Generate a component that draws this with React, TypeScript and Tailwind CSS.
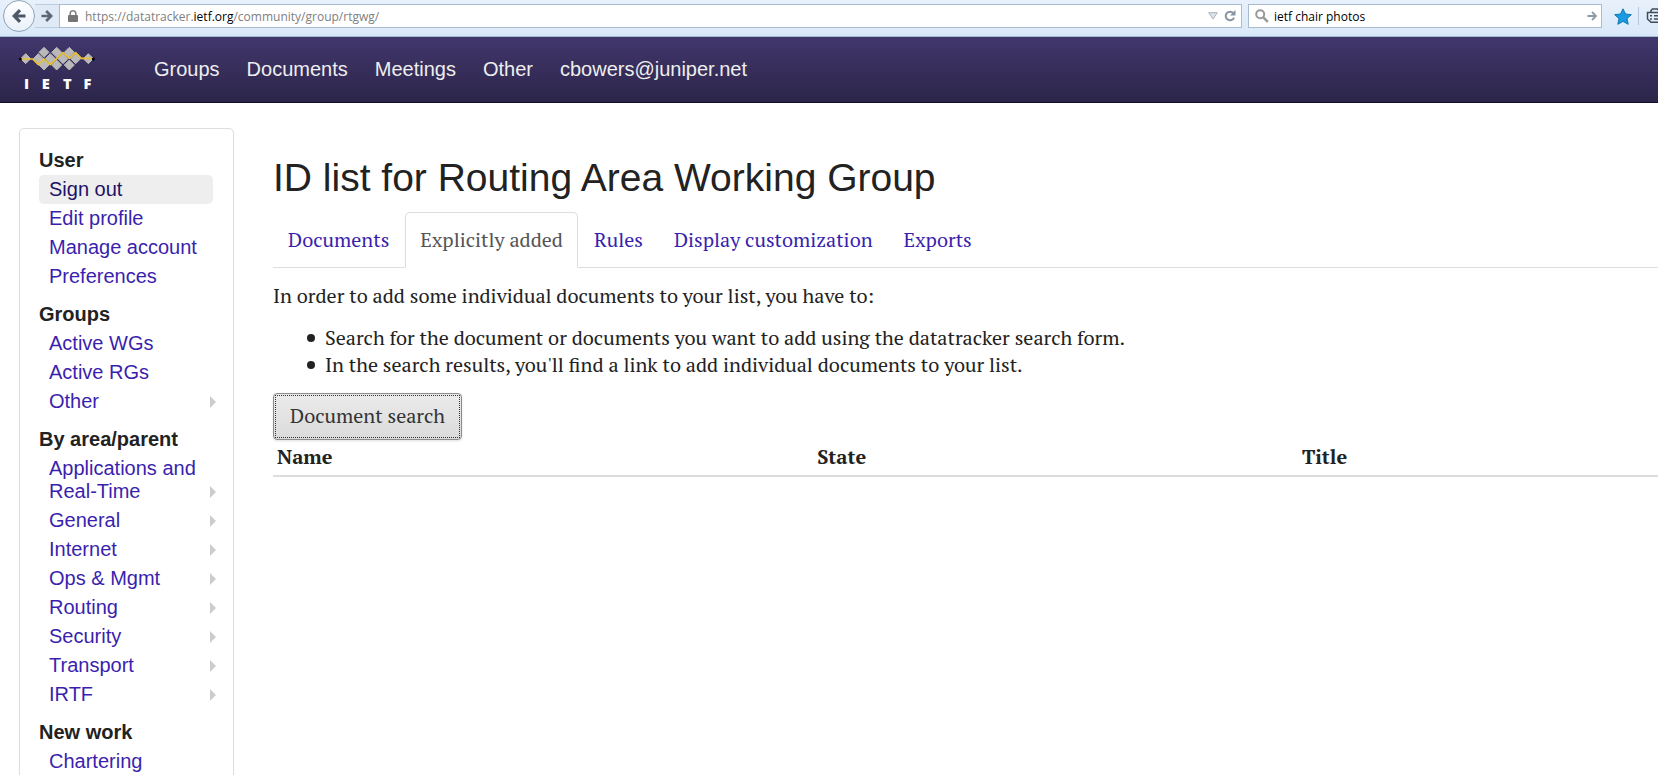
type NavEntry = { label: string; expands?: boolean; active?: boolean };

const menu: { title: string; items: NavEntry[] }[] = [
  {
    title: "User",
    items: [
      { label: "Sign out", active: true },
      { label: "Edit profile" },
      { label: "Manage account" },
      { label: "Preferences" },
    ],
  },
  {
    title: "Groups",
    items: [{ label: "Active WGs" }, { label: "Active RGs" }, { label: "Other", expands: true }],
  },
  {
    title: "By area/parent",
    items: [
      { label: "Applications and Real-Time", expands: true },
      { label: "General", expands: true },
      { label: "Internet", expands: true },
      { label: "Ops & Mgmt", expands: true },
      { label: "Routing", expands: true },
      { label: "Security", expands: true },
      { label: "Transport", expands: true },
      { label: "IRTF", expands: true },
    ],
  },
  { title: "New work", items: [{ label: "Chartering" }] },
];

const tabs = ["Documents", "Explicitly added", "Rules", "Display customization", "Exports"];

const steps = [
  "Search for the document or documents you want to add using the datatracker search form.",
  "In the search results, you'll find a link to add individual documents to your list.",
];

const diamonds = [
  [47, 56],
  [85, 56],
  [121, 56],
  [159, 56],
  [197, 56],
  [235, 56],
  [102, 37],
  [140, 37],
  [178, 37],
  [102, 75],
  [140, 75],
  [178, 75],
];

function Logo() {
  return (
    <svg viewBox="24 3 234 168" className="h-14 w-[78px]" role="img" aria-label="IETF">
      {diamonds.map(([x, y], i) => (
        <path
          key={i}
          d={`M${x} ${y - 15}L${x + 15} ${y}L${x} ${y + 15}L${x - 15} ${y}Z`}
          fill="#b9b9b9"
          stroke="#b9b9b9"
          strokeWidth="3"
          strokeLinejoin="round"
        />
      ))}
      <path
        d="M32 57H68L85 74L102 57L121 74L159 38L178 55L197 38L214 55H248"
        fill="none"
        stroke="#e6bf35"
        strokeWidth="5"
        strokeLinejoin="round"
      />
      <circle cx="31" cy="57" r="4.5" fill="#000" />
      <circle cx="250" cy="57" r="4.5" fill="#000" />
      <g fill="#fff" fontFamily="Open Sans, sans-serif" fontWeight="800" fontSize="44" textAnchor="middle">
        <text x="50" y="147">I</text>
        <text x="107" y="147">E</text>
        <text x="172" y="147">T</text>
        <text x="232" y="147">F</text>
      </g>
    </svg>
  );
}

function ArrowIcon({ flip, className }: { flip?: boolean; className: string }) {
  return (
    <svg viewBox="0 0 14 14" className={className} aria-hidden="true">
      <path
        d={flip ? "M13.5 7H3M8 1.2L2.2 7L8 12.8" : "M0.5 7H11M6 1.2L11.8 7L6 12.8"}
        fill="none"
        stroke="currentColor"
        strokeWidth="3.2"
      />
    </svg>
  );
}

function BrowserBar() {
  return (
    <div className="flex h-[37px] items-start overflow-hidden border-b border-[#a3b9cc] bg-linear-to-b from-[#e8f1fb] to-[#d9e8f8] font-['Open_Sans',sans-serif] text-xs">
      <button
        aria-label="Back"
        className="ml-[3px] flex size-8 shrink-0 items-center justify-center rounded-full border border-[#8fa3b8] bg-linear-to-b from-white to-[#e9f1fa] text-[#4c5866]"
      >
        <ArrowIcon flip className="size-[14px]" />
      </button>
      <button
        aria-label="Forward"
        className="mt-1 flex h-6 w-6 shrink-0 items-center justify-center border-y border-[#bccddd] bg-[#dfeaf6] text-[#5d6977]"
      >
        <ArrowIcon className="size-3" />
      </button>
      <div className="mt-1 flex h-6 min-w-0 flex-1 items-center border border-[#a9bccf] bg-white pl-2 pr-[5px]">
        <svg viewBox="0 0 10 12" className="mr-[7px] h-3 w-[10px] shrink-0" aria-hidden="true">
          <path d="M2.2 6V3.6a2.8 2.8 0 0 1 5.6 0V6" fill="none" stroke="#858585" strokeWidth="1.6" />
          <rect x="0" y="5" width="10" height="7" rx="1" fill="#757575" />
        </svg>
        <div role="textbox" aria-label="Address" className="flex-1 whitespace-nowrap pt-px text-[#808080]">
          https://datatracker.<span className="text-black">ietf.org</span>/community/group/rtgwg/
        </div>
        <button aria-label="Show history" className="mr-[6px]">
          <svg viewBox="0 0 10 8" className="h-2 w-[10px]" aria-hidden="true">
            <path d="M0.7 0.7H9.3L5 7Z" fill="#dde2e8" stroke="#a8b1bb" />
          </svg>
        </button>
        <button aria-label="Reload">
          <svg viewBox="0 0 12 12" className="size-3" aria-hidden="true">
            <path d="M9.3 3.2A4.3 4.3 0 1 0 10 7.6" fill="none" stroke="#8794a2" strokeWidth="2" />
            <path d="M11.5 0V5.5H6Z" fill="#8794a2" />
          </svg>
        </button>
      </div>
      <form className="ml-[6px] mt-1 flex h-6 w-[354px] shrink-0 items-center border border-[#a9bccf] bg-white pl-[6px] pr-1">
        <svg viewBox="0 0 14 14" className="mr-[5px] size-[14px] shrink-0" aria-hidden="true">
          <circle cx="5.2" cy="5.2" r="4" fill="none" stroke="#999" strokeWidth="2" />
          <path d="M8.3 8.3L12.8 12.8" stroke="#999" strokeWidth="2.6" />
        </svg>
        <input
          aria-label="Search the web"
          defaultValue="ietf chair photos"
          className="min-w-0 flex-1 bg-transparent pt-px text-black outline-none"
        />
        <button type="button" aria-label="Search" className="text-[#8d9aa8]">
          <svg viewBox="0 0 10 10" className="size-[10px]" aria-hidden="true">
            <path d="M0.5 5H8.5M5 1L9 5L5 9" fill="none" stroke="currentColor" strokeWidth="1.8" />
          </svg>
        </button>
      </form>
      <div className="mt-1 flex h-6 w-14 shrink-0 items-center pl-3">
        <button aria-label="Bookmark this page" className="shrink-0">
          <svg viewBox="0 0 18 17" className="h-[17px] w-[18px]" aria-hidden="true">
            <path
              d="M9 0.8L11.5 6L17.3 6.7L13 10.6L14.2 16.3L9 13.4L3.8 16.3L5 10.6L0.7 6.7L6.5 6Z"
              fill="#1a9ae0"
              stroke="#1478b4"
              strokeLinejoin="round"
            />
          </svg>
        </button>
        <span className="mx-[6px] h-[18px] w-px shrink-0 bg-[#b4c6d8]" />
        <button aria-label="Bookmarks" className="ml-px shrink-0">
          <svg viewBox="0 0 18 16" className="h-4 w-[18px]" aria-hidden="true">
            <path d="M5 4V2.5L6.5 1H11.5L13 2.5V4" fill="none" stroke="#414c5a" strokeWidth="1.6" />
            <path
              d="M1 4.5H17M1.5 4V11L5 14.3H16.5V4M4 7.8H6M8 7.8H16M4 11H6M8 11H16"
              fill="none"
              stroke="#414c5a"
              strokeWidth="1.5"
            />
          </svg>
        </button>
      </div>
    </div>
  );
}

function Sidebar() {
  return (
    <nav
      aria-label="Datatracker"
      className="flex w-[215px] shrink-0 flex-col gap-[9px] rounded-[5px] border border-[#ddd] py-[17px] pl-[19px] pr-5 font-['Liberation_Sans',sans-serif] text-[20px] leading-[23px] shadow-xs"
    >
      {menu.map((section) => (
        <section key={section.title}>
          <h2 className="py-[3px] font-bold">{section.title}</h2>
          <ul>
            {section.items.map((item) => (
              <li key={item.label}>
                <a
                  href="#"
                  className={
                    item.active
                      ? "flex rounded-[5px] bg-[#eee] px-[10px] py-[3px] text-[#1f1269]"
                      : "flex items-end justify-between px-[10px] py-[3px] text-[#3a1fae]"
                  }
                >
                  <span>{item.label}</span>
                  {item.expands && (
                    <svg viewBox="0 0 6 12" className="-mr-[13px] mb-[5px] h-3 w-[6px] shrink-0" aria-hidden="true">
                      <path d="M0 0L6 6L0 12Z" fill="#ccc" />
                    </svg>
                  )}
                </a>
              </li>
            ))}
          </ul>
        </section>
      ))}
    </nav>
  );
}

export default function App() {
  return (
    <div className="h-screen overflow-hidden bg-white text-[#222]">
      <BrowserBar />
      <header className="flex h-[66px] items-center border-b border-[#140f28] bg-linear-to-b from-[#41376d] to-[#2c2549] pb-[2px] pl-[18px] font-['Liberation_Sans',sans-serif] text-[20px] text-[#eee]">
        <a href="#">
          <Logo />
        </a>
        <nav aria-label="Main" className="ml-[58px] flex gap-[27px]">
          <a href="#">Groups</a>
          <a href="#">Documents</a>
          <a href="#">Meetings</a>
          <a href="#">Other</a>
          <a href="#">cbowers@juniper.net</a>
        </nav>
      </header>
      <div className="flex items-start gap-[39px] pl-[19px] pt-[25px]">
        <Sidebar />
        <main className="min-w-0 flex-1 pt-7 font-['PT_Serif','Liberation_Serif',serif] text-[20px] leading-[27px]">
          <h1 className="font-['Liberation_Sans',sans-serif] text-[39px] leading-[44px]">
            ID list for Routing Area Working Group
          </h1>
          <div role="tablist" className="mt-3 flex gap-px border-b border-[#ddd]">
            {tabs.map((tab) => (
              <a
                key={tab}
                href="#"
                role="tab"
                aria-selected={tab === "Explicitly added"}
                className={
                  tab === "Explicitly added"
                    ? "-mb-px rounded-t-[5px] border border-[#ddd] border-b-white bg-white px-[14px] pb-[14px] pt-[13px] text-[#555]"
                    : "px-[15px] py-[14px] text-[#3a1fae]"
                }
              >
                {tab}
              </a>
            ))}
          </div>
          <p className="mt-[14px]">In order to add some individual documents to your list, you have to:</p>
          <ul className="mt-[15px] pl-[34px]">
            {steps.map((step) => (
              <li
                key={step}
                className="flex items-center gap-[10px] before:size-2 before:shrink-0 before:rounded-full before:bg-[#222]"
              >
                {step}
              </li>
            ))}
          </ul>
          <button className="mt-[15px] block rounded-[4px] border border-[#8c8c8c] bg-linear-to-b from-[#ebebeb] to-[#dbdbdb] p-px text-[#333] shadow-sm">
            <span className="block border border-dotted border-[#333] px-[14px] pb-2 pt-[6px]">Document search</span>
          </button>
          <table className="w-full table-fixed">
            <thead>
              <tr className="border-b-2 border-[#ddd] text-left">
                <th className="w-[39%] px-1 pb-[5px] pt-[3px]">Name</th>
                <th className="w-[35%] px-1 pb-[5px] pt-[3px]">State</th>
                <th className="px-1 pb-[5px] pt-[3px]">Title</th>
              </tr>
            </thead>
          </table>
        </main>
      </div>
    </div>
  );
}
